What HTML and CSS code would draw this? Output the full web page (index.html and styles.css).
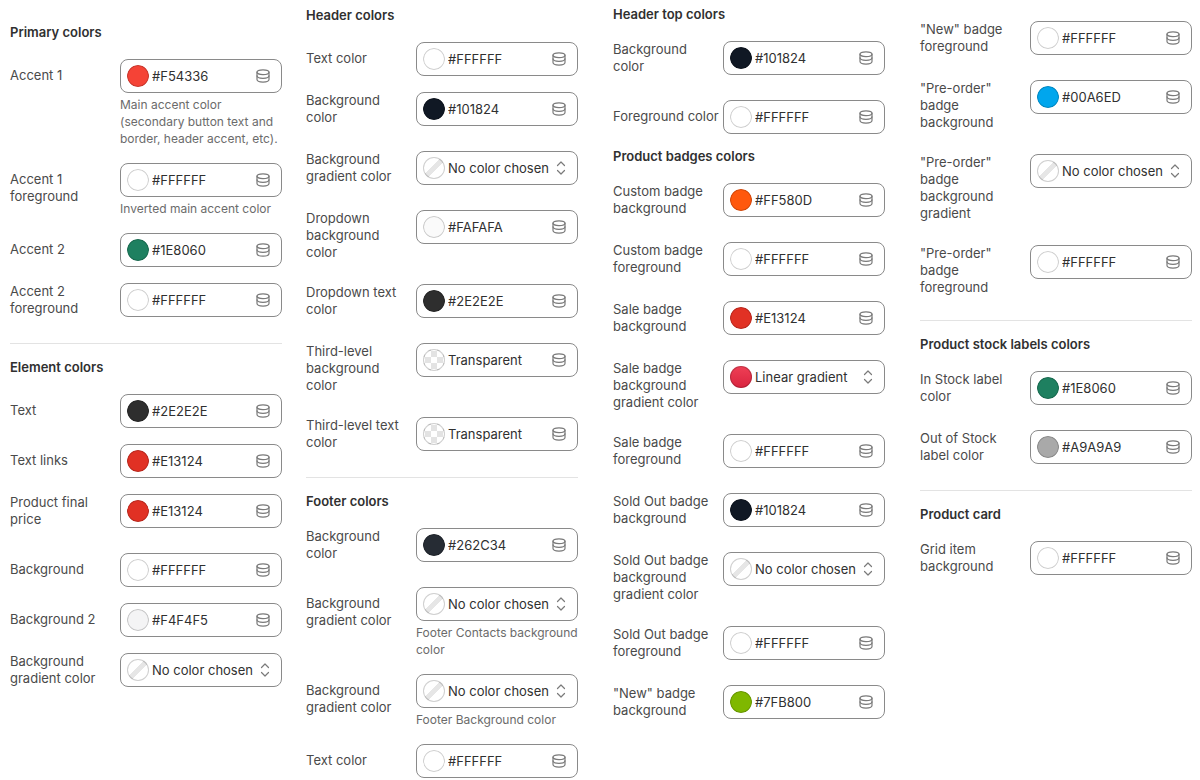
FILE: index.html
```
<!DOCTYPE html>
<html lang="en">

<head>
    <meta charset="UTF-8">
    <meta name="viewport" content="width=device-width, initial-scale=1.0">
    <title>Theme colors</title>
    <link rel="stylesheet" href="styles.css">
</head>

<body>
    <!-- shared icons -->
    <svg class="sprite" aria-hidden="true">
        <symbol id="db" viewBox="0 0 14 14">
            <ellipse cx="7" cy="3.2" rx="6" ry="2.4" />
            <path d="M1 3.2v7.4c0 1.4 2.7 2.5 6 2.5s6-1.100 6-2.500V3.200" />
            <path d="M1 6.800c0 1.400 2.700 2.500 6 2.500s6-1.100 6-2.500" />
        </symbol>
        <symbol id="updown" viewBox="0 0 10 14">
            <path d="M1.500 4.500 5 1l3.500 3.500" />
            <path d="M1.500 9.500 5 13l3.500-3.500" />
        </symbol>
    </svg>

    <main class="board">
        <div class="column column-first">
            <section class="group">
                <h2>Primary colors</h2>
                <div class="field">
                    <label for="accent1">Accent 1</label>
                    <div>
                        <div class="control"><input type="color" value="#f54336" aria-label="Accent 1 swatch"><input type="text" id="accent1" value="#F54336"><button type="button" aria-label="Connect source"><svg class="db"><use href="#db" /></svg></button></div>
                        <p class="help">Main accent color (secondary button text and border, header accent, etc).</p>
                    </div>
                </div>
                <div class="field">
                    <label for="accent1-fg">Accent 1 foreground</label>
                    <div>
                        <div class="control"><input type="color" value="#ffffff" aria-label="Accent 1 foreground swatch"><input type="text" id="accent1-fg" value="#FFFFFF"><button type="button" aria-label="Connect source"><svg class="db"><use href="#db" /></svg></button></div>
                        <p class="help">Inverted main accent color</p>
                    </div>
                </div>
                <div class="field">
                    <label for="accent2">Accent 2</label>
                    <div class="control"><input type="color" value="#1e8060" aria-label="Accent 2 swatch"><input type="text" id="accent2" value="#1E8060"><button type="button" aria-label="Connect source"><svg class="db"><use href="#db" /></svg></button></div>
                </div>
                <div class="field two-line">
                    <label for="accent2-fg">Accent 2 foreground</label>
                    <div class="control"><input type="color" value="#ffffff" aria-label="Accent 2 foreground swatch"><input type="text" id="accent2-fg" value="#FFFFFF"><button type="button" aria-label="Connect source"><svg class="db"><use href="#db" /></svg></button></div>
                </div>
            </section>

            <section class="group divided">
                <h2>Element colors</h2>
                <div class="field">
                    <label for="text">Text</label>
                    <div class="control"><input type="color" value="#2e2e2e" aria-label="Text swatch"><input type="text" id="text" value="#2E2E2E"><button type="button" aria-label="Connect source"><svg class="db"><use href="#db" /></svg></button></div>
                </div>
                <div class="field">
                    <label for="links">Text links</label>
                    <div class="control"><input type="color" value="#e13124" aria-label="Text links swatch"><input type="text" id="links" value="#E13124"><button type="button" aria-label="Connect source"><svg class="db"><use href="#db" /></svg></button></div>
                </div>
                <div class="field two-line">
                    <label for="price">Product final price</label>
                    <div class="control"><input type="color" value="#e13124" aria-label="Product final price swatch"><input type="text" id="price" value="#E13124"><button type="button" aria-label="Connect source"><svg class="db"><use href="#db" /></svg></button></div>
                </div>
                <div class="field">
                    <label for="bg">Background</label>
                    <div class="control"><input type="color" value="#ffffff" aria-label="Background swatch"><input type="text" id="bg" value="#FFFFFF"><button type="button" aria-label="Connect source"><svg class="db"><use href="#db" /></svg></button></div>
                </div>
                <div class="field">
                    <label for="bg2">Background 2</label>
                    <div class="control"><input type="color" value="#f4f4f5" aria-label="Background 2 swatch"><input type="text" id="bg2" value="#F4F4F5"><button type="button" aria-label="Connect source"><svg class="db"><use href="#db" /></svg></button></div>
                </div>
                <div class="field two-line">
                    <label for="bg-gradient">Background gradient color</label>
                    <div class="control"><span class="swatch none"></span><select id="bg-gradient"><option>No color chosen</option></select><svg class="updown"><use href="#updown" /></svg></div>
                </div>
            </section>
        </div>

        <div class="column column-header">
            <section class="group">
                <h2>Header colors</h2>
                <div class="field">
                    <label for="header-text">Text color</label>
                    <div class="control"><input type="color" value="#ffffff" aria-label="Header text swatch"><input type="text" id="header-text" value="#FFFFFF"><button type="button" aria-label="Connect source"><svg class="db"><use href="#db" /></svg></button></div>
                </div>
                <div class="field two-line">
                    <label for="header-bg">Background color</label>
                    <div class="control"><input type="color" value="#101824" aria-label="Header background swatch"><input type="text" id="header-bg" value="#101824"><button type="button" aria-label="Connect source"><svg class="db"><use href="#db" /></svg></button></div>
                </div>
                <div class="field two-line">
                    <label for="header-gradient">Background gradient color</label>
                    <div class="control"><span class="swatch none"></span><select id="header-gradient"><option>No color chosen</option></select><svg class="updown"><use href="#updown" /></svg></div>
                </div>
                <div class="field tall">
                    <label for="dropdown-bg">Dropdown background color</label>
                    <div class="control"><input type="color" value="#fafafa" aria-label="Dropdown background swatch"><input type="text" id="dropdown-bg" value="#FAFAFA"><button type="button" aria-label="Connect source"><svg class="db"><use href="#db" /></svg></button></div>
                </div>
                <div class="field two-line">
                    <label for="dropdown-text">Dropdown text color</label>
                    <div class="control"><input type="color" value="#2e2e2e" aria-label="Dropdown text swatch"><input type="text" id="dropdown-text" value="#2E2E2E"><button type="button" aria-label="Connect source"><svg class="db"><use href="#db" /></svg></button></div>
                </div>
                <div class="field tall">
                    <label for="third-bg">Third-level background color</label>
                    <div class="control"><span class="swatch transparent"></span><input type="text" id="third-bg" value="Transparent"><button type="button" aria-label="Connect source"><svg class="db"><use href="#db" /></svg></button></div>
                </div>
                <div class="field two-line">
                    <label for="third-text">Third-level text color</label>
                    <div class="control"><span class="swatch transparent"></span><input type="text" id="third-text" value="Transparent"><button type="button" aria-label="Connect source"><svg class="db"><use href="#db" /></svg></button></div>
                </div>
            </section>

            <section class="group divided">
                <h2>Footer colors</h2>
                <div class="field two-line">
                    <label for="footer-bg">Background color</label>
                    <div class="control"><input type="color" value="#262c34" aria-label="Footer background swatch"><input type="text" id="footer-bg" value="#262C34"><button type="button" aria-label="Connect source"><svg class="db"><use href="#db" /></svg></button></div>
                </div>
                <div class="field">
                    <label for="contacts-gradient">Background gradient color</label>
                    <div>
                        <div class="control"><span class="swatch none"></span><select id="contacts-gradient"><option>No color chosen</option></select><svg class="updown"><use href="#updown" /></svg></div>
                        <p class="help">Footer Contacts background color</p>
                    </div>
                </div>
                <div class="field">
                    <label for="footer-gradient">Background gradient color</label>
                    <div>
                        <div class="control"><span class="swatch none"></span><select id="footer-gradient"><option>No color chosen</option></select><svg class="updown"><use href="#updown" /></svg></div>
                        <p class="help">Footer Background color</p>
                    </div>
                </div>
                <div class="field">
                    <label for="footer-text">Text color</label>
                    <div class="control"><input type="color" value="#ffffff" aria-label="Footer text swatch"><input type="text" id="footer-text" value="#FFFFFF"><button type="button" aria-label="Connect source"><svg class="db"><use href="#db" /></svg></button></div>
                </div>
            </section>
        </div>

        <div class="column column-badges">
            <section class="group">
                <h2>Header top colors</h2>
                <div class="field two-line">
                    <label for="top-bg">Background color</label>
                    <div class="control"><input type="color" value="#101824" aria-label="Header top background swatch"><input type="text" id="top-bg" value="#101824"><button type="button" aria-label="Connect source"><svg class="db"><use href="#db" /></svg></button></div>
                </div>
                <div class="field">
                    <label for="top-fg">Foreground color</label>
                    <div class="control"><input type="color" value="#ffffff" aria-label="Header top foreground swatch"><input type="text" id="top-fg" value="#FFFFFF"><button type="button" aria-label="Connect source"><svg class="db"><use href="#db" /></svg></button></div>
                </div>
            </section>

            <section class="group">
                <h2>Product badges colors</h2>
                <div class="field two-line">
                    <label for="custom-bg">Custom badge background</label>
                    <div class="control"><input type="color" value="#ff580d" aria-label="Custom badge background swatch"><input type="text" id="custom-bg" value="#FF580D"><button type="button" aria-label="Connect source"><svg class="db"><use href="#db" /></svg></button></div>
                </div>
                <div class="field two-line">
                    <label for="custom-fg">Custom badge foreground</label>
                    <div class="control"><input type="color" value="#ffffff" aria-label="Custom badge foreground swatch"><input type="text" id="custom-fg" value="#FFFFFF"><button type="button" aria-label="Connect source"><svg class="db"><use href="#db" /></svg></button></div>
                </div>
                <div class="field two-line">
                    <label for="sale-bg">Sale badge background</label>
                    <div class="control"><input type="color" value="#e13124" aria-label="Sale badge background swatch"><input type="text" id="sale-bg" value="#E13124"><button type="button" aria-label="Connect source"><svg class="db"><use href="#db" /></svg></button></div>
                </div>
                <div class="field tall">
                    <label for="sale-gradient">Sale badge background gradient color</label>
                    <div class="control"><span class="swatch linear"></span><select id="sale-gradient"><option>Linear gradient</option></select><svg class="updown"><use href="#updown" /></svg></div>
                </div>
                <div class="field two-line">
                    <label for="sale-fg">Sale badge foreground</label>
                    <div class="control"><input type="color" value="#ffffff" aria-label="Sale badge foreground swatch"><input type="text" id="sale-fg" value="#FFFFFF"><button type="button" aria-label="Connect source"><svg class="db"><use href="#db" /></svg></button></div>
                </div>
                <div class="field two-line">
                    <label for="sold-bg">Sold Out badge background</label>
                    <div class="control"><input type="color" value="#101824" aria-label="Sold Out badge background swatch"><input type="text" id="sold-bg" value="#101824"><button type="button" aria-label="Connect source"><svg class="db"><use href="#db" /></svg></button></div>
                </div>
                <div class="field tall">
                    <label for="sold-gradient">Sold Out badge background gradient color</label>
                    <div class="control"><span class="swatch none"></span><select id="sold-gradient"><option>No color chosen</option></select><svg class="updown"><use href="#updown" /></svg></div>
                </div>
                <div class="field two-line">
                    <label for="sold-fg">Sold Out badge foreground</label>
                    <div class="control"><input type="color" value="#ffffff" aria-label="Sold Out badge foreground swatch"><input type="text" id="sold-fg" value="#FFFFFF"><button type="button" aria-label="Connect source"><svg class="db"><use href="#db" /></svg></button></div>
                </div>
                <div class="field two-line">
                    <label for="new-bg">"New" badge background</label>
                    <div class="control"><input type="color" value="#7fb800" aria-label="New badge background swatch"><input type="text" id="new-bg" value="#7FB800"><button type="button" aria-label="Connect source"><svg class="db"><use href="#db" /></svg></button></div>
                </div>
            </section>
        </div>

        <div class="column column-last">
            <section class="group">
                <div class="field two-line">
                    <label for="new-fg">"New" badge foreground</label>
                    <div class="control"><input type="color" value="#ffffff" aria-label="New badge foreground swatch"><input type="text" id="new-fg" value="#FFFFFF"><button type="button" aria-label="Connect source"><svg class="db"><use href="#db" /></svg></button></div>
                </div>
                <div class="field tall">
                    <label for="pre-bg">"Pre-order" badge background</label>
                    <div class="control"><input type="color" value="#00a6ed" aria-label="Pre-order badge background swatch"><input type="text" id="pre-bg" value="#00A6ED"><button type="button" aria-label="Connect source"><svg class="db"><use href="#db" /></svg></button></div>
                </div>
                <div class="field tall">
                    <label for="pre-gradient">"Pre-order" badge background gradient</label>
                    <div class="control"><span class="swatch none"></span><select id="pre-gradient"><option>No color chosen</option></select><svg class="updown"><use href="#updown" /></svg></div>
                </div>
                <div class="field tall">
                    <label for="pre-fg">"Pre-order" badge foreground</label>
                    <div class="control"><input type="color" value="#ffffff" aria-label="Pre-order badge foreground swatch"><input type="text" id="pre-fg" value="#FFFFFF"><button type="button" aria-label="Connect source"><svg class="db"><use href="#db" /></svg></button></div>
                </div>
            </section>

            <section class="group divided">
                <h2>Product stock labels colors</h2>
                <div class="field two-line">
                    <label for="in-stock">In Stock label color</label>
                    <div class="control"><input type="color" value="#1e8060" aria-label="In Stock label swatch"><input type="text" id="in-stock" value="#1E8060"><button type="button" aria-label="Connect source"><svg class="db"><use href="#db" /></svg></button></div>
                </div>
                <div class="field two-line">
                    <label for="out-stock">Out of Stock label color</label>
                    <div class="control"><input type="color" value="#a9a9a9" aria-label="Out of Stock label swatch"><input type="text" id="out-stock" value="#A9A9A9"><button type="button" aria-label="Connect source"><svg class="db"><use href="#db" /></svg></button></div>
                </div>
            </section>

            <section class="group divided">
                <h2>Product card</h2>
                <div class="field two-line">
                    <label for="grid-bg">Grid item background</label>
                    <div class="control"><input type="color" value="#ffffff" aria-label="Grid item background swatch"><input type="text" id="grid-bg" value="#FFFFFF"><button type="button" aria-label="Connect source"><svg class="db"><use href="#db" /></svg></button></div>
                </div>
            </section>
        </div>
    </main>
</body>

</html>
```
FILE: styles.css
```
* {
    box-sizing: border-box;
}

body {
    margin: 0;
    background: #fff;
    color: #303030;
    font-family: Inter, "Liberation Sans", sans-serif;
    font-size: 13px;
    line-height: 17px;
}

.sprite {
    display: none;
}

.board {
    display: flex;
    padding: 0 8px 0 10px;
}

.column {
    flex: 1;
    min-width: 0;
}

.column-first {
    padding-top: 24px;
    margin-right: 24px;
}

.column-header {
    padding-top: 7px;
    margin-right: 35px;
}

.column-badges {
    padding-top: 6px;
    margin-right: 35px;
}

.column-last {
    padding-top: 21px;
}

.group {
    display: flex;
    flex-direction: column;
    gap: 16px;
}

.group + .group {
    margin-top: 14px;
}

.group + .divided {
    margin-top: 17px;
    padding-top: 15px;
    border-top: 1px solid #e3e3e3;
}

h2 {
    margin: 0 0 2px;
    font-size: 13px;
    font-weight: 600;
    line-height: 17px;
}

.field {
    display: grid;
    grid-template-columns: 110px 1fr;
    align-items: start;
}

.field label {
    padding: 8px 3px 8px 0;
    color: #4a4a4a;
}

/* labels that wrap start level with the top of the control */
.two-line label {
    padding: 0 3px 9px 0;
}

.tall label {
    padding: 0 3px 7px 0;
}

.control {
    display: flex;
    align-items: center;
    gap: 3px;
    height: 34px;
    padding: 0 11px 0 6px;
    border: 1px solid #8a8a8a;
    border-radius: 8px;
}

.control input[type="text"],
.control select {
    flex: 1;
    min-width: 0;
    width: 0;
    height: 20px;
    padding: 0;
    border: 0;
    background: none;
    color: #303030;
    font: inherit;
    appearance: none;
}

.control input[type="color"],
.swatch {
    flex: none;
    width: 22px;
    height: 22px;
    padding: 0;
    border: 0;
    border-radius: 50%;
    background: none;
    appearance: none;
    cursor: pointer;
}

input[type="color"]::-webkit-color-swatch-wrapper {
    padding: 0;
}

input[type="color"]::-webkit-color-swatch {
    border: 0;
    border-radius: 50%;
    box-shadow: inset 0 0 0 1px rgba(0, 0, 0, 0.19);
}

.swatch {
    box-shadow: inset 0 0 0 1px rgba(0, 0, 0, 0.19);
}

.swatch.none {
    background: linear-gradient(135deg, #fff 41%, #e6e6e6 41%, #e6e6e6 59%, #fff 59%);
}

.swatch.transparent {
    background: repeating-conic-gradient(#fff 0 25%, #e3e3e3 0 50%) 2px 8px / 12px 12px;
}

.swatch.linear {
    background: linear-gradient(#ef4056, #d9243f);
}

.control button {
    display: flex;
    padding: 0;
    border: 0;
    background: none;
    cursor: pointer;
}

.db,
.updown {
    flex: none;
    height: 14px;
    fill: none;
    stroke: #7a7a7a;
    stroke-width: 1.2;
    stroke-linecap: round;
    stroke-linejoin: round;
    pointer-events: none;
}

.db {
    width: 14px;
}

.updown {
    width: 10px;
}

.help {
    margin: 3px 0 0;
    color: #6b6b6b;
    font-size: 12px;
}
```
